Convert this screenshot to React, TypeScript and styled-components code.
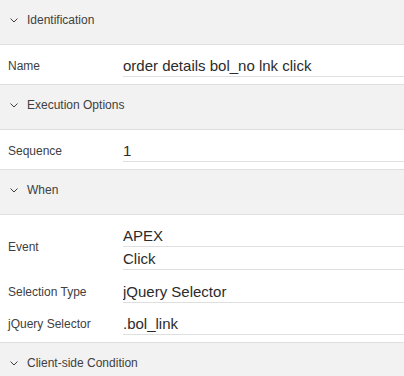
import styled, { createGlobalStyle } from "styled-components";

const GlobalStyle = createGlobalStyle`
  html, body {
    margin: 0;
    padding: 0;
    overflow: hidden;
    background: #ffffff;
  }
  body {
    font-family: "Liberation Sans", Arial, sans-serif;
    color: #404040;
  }
`;

const Panel = styled.div`
  width: 404px;
  display: flex;
  flex-direction: column;
`;

const Section = styled.section`
  display: flex;
  flex-direction: column;
`;

const SectionHeader = styled.div`
  height: 45px;
  box-sizing: border-box;
  padding: 12px 0 0 10px;
  background: #f2f2f2;
  border-bottom: 1px solid #dfdfdf;
  display: flex;
  align-items: flex-start;
  gap: 9px;
  font-size: 12px;
  line-height: 16px;
  color: #404040;
`;

const ChevronBox = styled.span`
  width: 8px;
  height: 16px;
  display: flex;
  align-items: center;
  svg {
    display: block;
  }
`;

const SectionBody = styled.div`
  padding: 4px 0 3px;
  border-bottom: 1px solid #dfdfdf;
  background: #ffffff;
  display: flex;
  flex-direction: column;
`;

const Row = styled.div<{ $extra?: boolean }>`
  display: grid;
  grid-template-columns: 115px 1fr;
  align-items: center;
  padding: 5px 0 ${(p) => (p.$extra ? "5px" : "4px")} 8px;
`;

const Label = styled.div`
  font-size: 12px;
  line-height: 16px;
  color: #404040;
  white-space: nowrap;
`;

const FieldStack = styled.div`
  display: flex;
  flex-direction: column;
`;

const Field = styled.div`
  height: 21px;
  padding-top: 1px;
  font-size: 15px;
  line-height: 21px;
  color: #2b2b2b;
  border-bottom: 1px solid #dfdfdf;
  white-space: nowrap;
  overflow: hidden;
`;

const Chevron = () => (
  <ChevronBox>
    <svg width="8" height="5" viewBox="0 0 8 5">
      <polyline
        points="0.5,0.5 4,4 7.5,0.5"
        fill="none"
        stroke="#404040"
        strokeWidth="1"
      />
    </svg>
  </ChevronBox>
);

interface IRow {
  label: string;
  values: string[];
}

interface ISection {
  title: string;
  rows: IRow[];
}

const sections: ISection[] = [
  {
    title: "Identification",
    rows: [{ label: "Name", values: ["order details bol_no lnk click"] }],
  },
  {
    title: "Execution Options",
    rows: [{ label: "Sequence", values: ["1"] }],
  },
  {
    title: "When",
    rows: [
      { label: "Event", values: ["APEX", "Click"] },
      { label: "Selection Type", values: ["jQuery Selector"] },
      { label: "jQuery Selector", values: [".bol_link"] },
    ],
  },
  {
    title: "Client-side Condition",
    rows: [],
  },
];

function App() {
  return (
    <>
      <GlobalStyle />
      <Panel>
        {sections.map((section) => (
          <Section key={section.title}>
            <SectionHeader>
              <Chevron />
              <span>{section.title}</span>
            </SectionHeader>
            {section.rows.length > 0 && (
              <SectionBody>
                {section.rows.map((row) => (
                  <Row key={row.label} $extra={row.values.length > 1}>
                    <Label>{row.label}</Label>
                    <FieldStack>
                      {row.values.map((v) => (
                        <Field key={v}>{v}</Field>
                      ))}
                    </FieldStack>
                  </Row>
                ))}
              </SectionBody>
            )}
          </Section>
        ))}
      </Panel>
    </>
  );
}

export default App;
